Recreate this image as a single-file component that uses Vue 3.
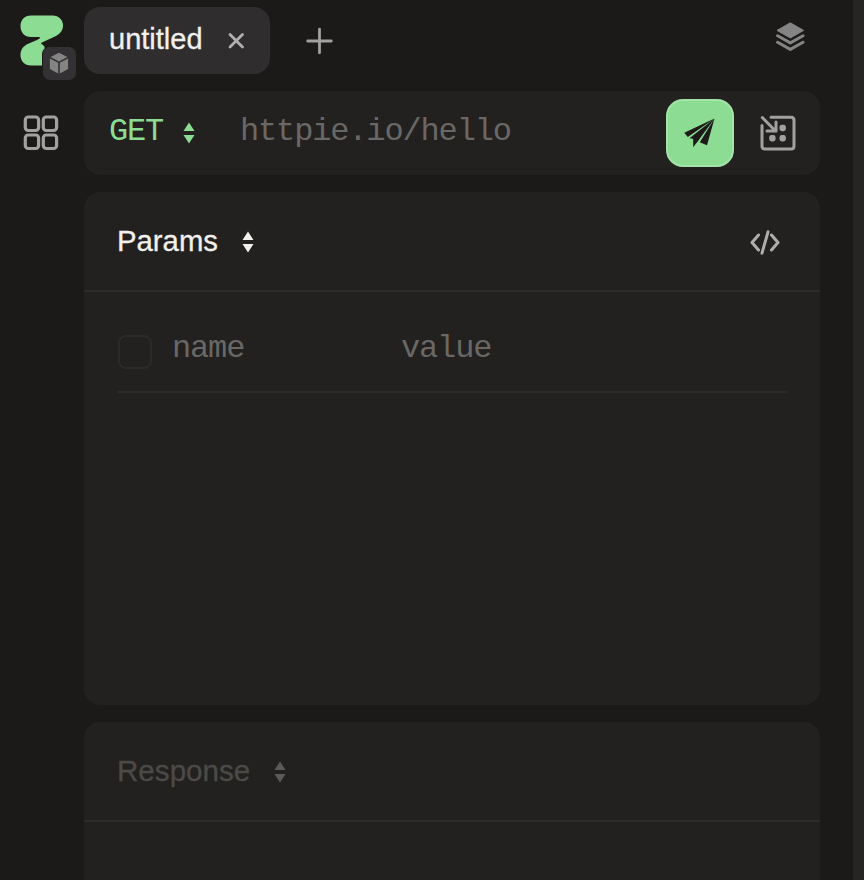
<script setup>
const method = 'GET'
const placeholders = { url: 'httpie.io/hello', name: 'name', value: 'value' }
</script>

<template>
  <div class="app">
    <aside class="sidebar">
      <div class="brand">
        <svg class="logo" width="44" height="52" viewBox="0 0 44 52">
          <path fill="#8cdc94" d="M11 .5H32.500C39 .5 43 5 43 10.500C43 15 40.500 18.500 36 21L23.500 26.700C20.500 28 20.500 28.500 22.500 29.500Q25 31 25 34V50.500H11C4.500 50.500 .5 46 .5 40C.5 35 3 31.500 7 29.300L17 25C21 23 21 22 18 22H11C4.500 22 .5 17.500 .5 11.300C.5 5 4.500 .5 11 .5Z" />
        </svg>
        <span class="badge">
          <svg width="20" height="23" viewBox="0 0 20 23">
            <path fill="#858484" d="M10 .8 18.400 5 10 9.400 1.600 5ZM.9 6.500 9.200 10.800V21.500L.9 17ZM19.100 6.500 10.800 10.800V21.500L19.100 17Z" />
          </svg>
        </span>
      </div>
      <svg class="grid-icon" width="36" height="36" viewBox="0 0 36 36" fill="none" stroke="#a3a19f" stroke-width="3.200">
        <rect x="2.300" y="2" width="13.300" height="13.500" rx="3" />
        <rect x="20.300" y="2" width="13.300" height="13.500" rx="3" />
        <rect x="2.300" y="20" width="13.300" height="13.500" rx="3" />
        <rect x="20.300" y="20" width="13.300" height="13.500" rx="3" />
      </svg>
    </aside>

    <main class="main">
      <nav class="tabs">
        <div class="tab">
          <span class="tab-title">untitled</span>
          <svg width="18" height="18" viewBox="0 0 18 18" fill="none" stroke="#b3b1af" stroke-width="2.800" stroke-linecap="round">
            <path d="M3 2.500 15.500 15M15.500 2.500 3 15" />
          </svg>
        </div>
        <svg class="plus" width="28" height="28" viewBox="0 0 28 28" fill="none" stroke="#a3a19f" stroke-width="2.800" stroke-linecap="round">
          <path d="M14.500 2.200V25.800M2.700 14H26.300" />
        </svg>
        <svg class="layers" width="30" height="30" viewBox="0 0 30 30">
          <path fill="#848484" stroke="#848484" stroke-width="1" stroke-linejoin="round" d="M15.300 .8 28.600 8.400 15.300 16 2 8.400Z" />
          <path fill="none" stroke="#848484" stroke-width="3" stroke-linecap="round" stroke-linejoin="round" d="M2.600 13.800 15.300 20.900 28 13.800M2.600 20.300 15.300 27.400 28 20.300" />
        </svg>
      </nav>

      <section class="request-bar">
        <span class="mono method">{{ method }}</span>
        <svg class="sort green" width="12" height="22" viewBox="0 0 12 22"><path d="M6 .5 11.500 9H.5ZM.5 13H11.500L6 21.500Z" /></svg>
        <span class="mono url">{{ placeholders.url }}</span>
        <button class="send" aria-label="Send">
          <svg width="32" height="30" viewBox="0 0 32 30">
            <path fill="#1c1b19" d="M30.500 .5 .3 14.800 3.800 19ZM30.500 .5 5.500 20.200 9.200 20.800V29.200L14.400 22.500ZM30.500 .5 15.800 24.300 23 27.200Z" />
          </svg>
        </button>
        <svg class="import" width="36" height="36" viewBox="0 0 36 36" fill="none" stroke="#a3a19f" stroke-width="3" stroke-linecap="round" stroke-linejoin="round">
          <path d="M11 2.300H31Q34 2.300 34 5.300V31Q34 34 31 34H5Q2 34 2 31V10.500" />
          <path d="M2.300 2.500 15 15.500M16 7V16H7" />
          <g fill="#a3a19f" stroke="none">
            <rect x="19.500" y="9.800" width="6.400" height="6.400" rx="2.400" />
            <rect x="9.200" y="20.100" width="6.400" height="6.400" rx="2.400" />
            <rect x="19.500" y="20.100" width="6.400" height="6.400" rx="2.400" />
          </g>
        </svg>
      </section>

      <section class="panel params">
        <header class="panel-head">
          <h2 class="title">Params</h2>
          <svg class="sort" width="12" height="22" viewBox="0 0 12 22"><path d="M6 .5 11.500 9H.5ZM.5 13H11.500L6 21.500Z" /></svg>
          <svg class="code" width="30" height="25" viewBox="0 0 30 25" fill="none" stroke="#b0aeac" stroke-width="3" stroke-linecap="round" stroke-linejoin="round">
            <path d="M8.500 5 2 12.500 8.500 20M21.500 5 28 12.500 21.500 20M18 1.800 12 23.200" />
          </svg>
        </header>
        <div class="row">
          <span class="checkbox"></span>
          <span class="mono name">{{ placeholders.name }}</span>
          <span class="mono value">{{ placeholders.value }}</span>
        </div>
      </section>

      <section class="panel response">
        <header class="panel-head">
          <h2 class="title">Response</h2>
          <svg class="sort" width="12" height="22" viewBox="0 0 12 22"><path d="M6 .5 11.500 9H.5ZM.5 13H11.500L6 21.500Z" /></svg>
        </header>
      </section>
    </main>
    <div class="edge"></div>
  </div>
</template>

<style>
body {
  background: #1b1a18;
  overflow: hidden;
}
</style>

<style scoped>
.app {
  display: grid;
  grid-template-columns: 84px 736px 11px;
  column-gap: 0;
  height: 880px;
  overflow: hidden;
  background: #1b1a18;
  font-family: "Liberation Sans", Arial, sans-serif;
}
.app * {
  box-sizing: border-box;
}
svg {
  display: block;
  flex: none;
}
.sidebar {
  padding: 15px 0 0 20px;
}
.brand {
  position: relative;
  width: 56px;
  height: 66px;
}
.badge {
  position: absolute;
  left: 22px;
  top: 31px;
  width: 35px;
  height: 35px;
  padding-right: 2px;
  border: 1px solid #1b1a18;
  border-radius: 8px;
  background: #333133;
  display: flex;
  align-items: center;
  justify-content: center;
}
.grid-icon {
  margin: 34px 0 0 3px;
}
.main {
  display: flex;
  flex-direction: column;
  padding-top: 7px;
  height: 880px;
}
.tabs {
  display: flex;
  align-items: flex-start;
  height: 67px;
  margin-bottom: 17px;
  flex: none;
}
.tab {
  display: flex;
  align-items: center;
  width: 186px;
  height: 67px;
  padding-left: 25px;
  border-radius: 16px;
  background: #2f2d2e;
}
.tab-title {
  width: 118px;
  padding-bottom: 3px;
  font-size: 29px;
  line-height: 34px;
  color: #f2f0ed;
  -webkit-text-stroke: 0.3px #f2f0ed;
}
.plus {
  margin: 20px 0 0 35px;
}
.layers {
  margin: 15px 15px 0 auto;
}
.mono {
  font-family: "Liberation Mono", monospace;
  font-size: 32px;
  letter-spacing: -1.150px;
  line-height: 36px;
  color: #6a6866;
}
.request-bar {
  display: flex;
  align-items: center;
  height: 84px;
  margin-bottom: 17px;
  padding: 0 24px 0 25px;
  flex: none;
  border-radius: 16px;
  background: #22211f;
}
.method {
  width: 74px;
  padding-bottom: 2px;
  color: #8cdc94;
}
.sort {
  fill: #f2f0ed;
}
.sort.green {
  fill: #8cdc94;
}
.url {
  margin-left: 45px;
  padding-bottom: 2px;
  flex: 1;
}
.send {
  display: flex;
  align-items: center;
  justify-content: center;
  width: 68px;
  height: 68px;
  margin-right: 26px;
  padding: 0;
  border: 2px solid #a3e3a8;
  border-radius: 17px;
  background: #8cdc94;
}
.panel {
  flex: none;
  border-radius: 16px;
  background: #22211f;
}
.params {
  height: 513px;
  margin-bottom: 17px;
}
.response {
  height: 190px;
}
.panel-head {
  display: flex;
  align-items: center;
  height: 100px;
  padding: 2px 40px 0 33px;
  border-bottom: 2px solid #2d2c2b;
}
.title {
  margin: 0 24px 0 0;
  padding-bottom: 3px;
  font-size: 29.300px;
  font-weight: 400;
  line-height: 34px;
  color: #f2f0ed;
  -webkit-text-stroke: 0.3px currentColor;
}
.code {
  margin-left: auto;
}
.response .title {
  font-size: 29.600px;
  color: #4b4a48;
}
.response .sort {
  fill: #5b5a58;
}
.row {
  display: flex;
  align-items: flex-start;
  height: 101px;
  margin: 0 33px 0 34px;
  padding-top: 39px;
  border-bottom: 2px solid #2c2b2a;
}
.checkbox {
  width: 34px;
  height: 34px;
  margin-top: 4px;
  margin-right: 20px;
  border: 2px solid #2b2a28;
  border-radius: 8px;
}
.name {
  width: 229px;
}
.edge {
  width: 11px;
  margin-left: 33px;
  background: #262523;
}
</style>
